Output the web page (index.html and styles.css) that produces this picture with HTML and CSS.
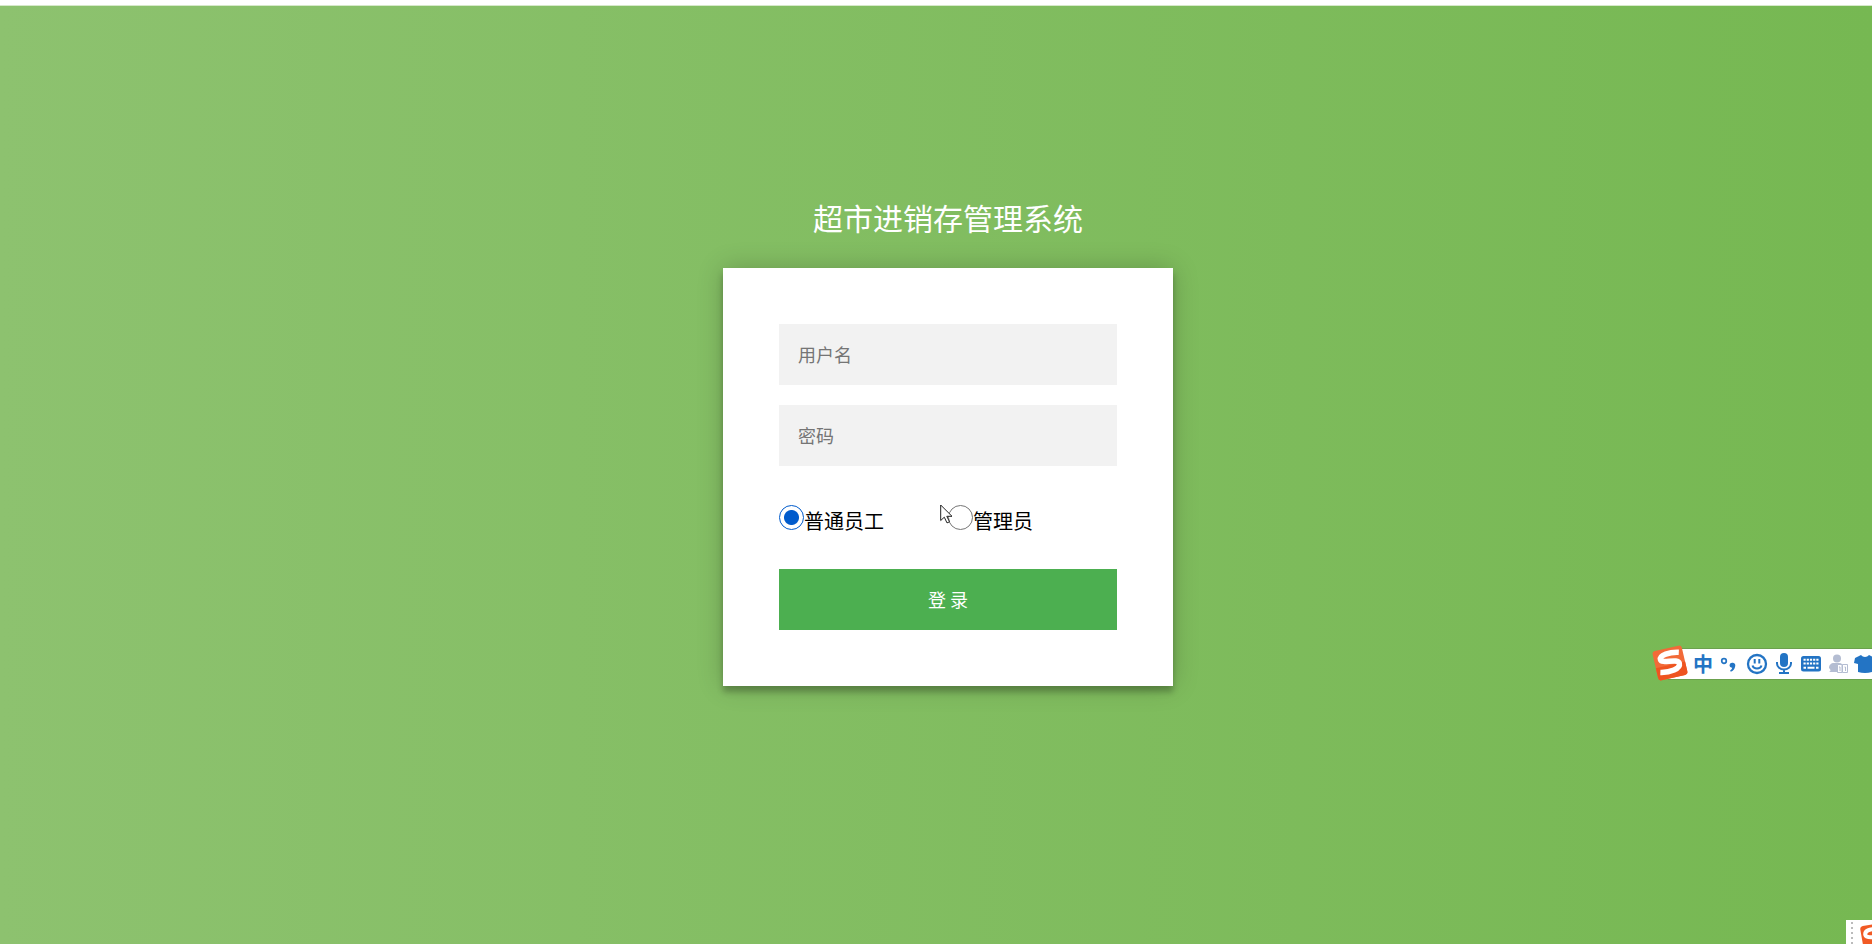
FILE: index.html
```html
<!DOCTYPE html>
<html lang="zh-CN">
<head>
<meta charset="UTF-8">
<meta name="viewport" content="width=device-width, initial-scale=1.0">
<title>超市进销存管理系统</title>
<link rel="stylesheet" href="styles.css">
</head>
<body>
<main class="login-page">
    <h1 class="title">超市进销存管理系统</h1>
    <form class="login-form" id="loginForm">
        <input class="field" type="text" name="username" placeholder="用户名" aria-label="用户名">
        <input class="field" type="password" name="password" placeholder="密码" aria-label="密码">
        <div class="roles">
            <div class="role">
                <input type="radio" id="staff" name="role" value="staff" checked>
                <label for="staff">普通员工</label>
            </div>
            <div class="role">
                <input type="radio" id="admin" name="role" value="admin">
                <label for="admin">管理员</label>
            </div>
        </div>
        <button class="submit" type="submit">登 录</button>
    </form>
</main>

<!-- mouse pointer -->
<svg class="cursor" viewBox="0 0 13 20" aria-hidden="true">
    <path d="M.7 1v15.500l3.600-3.300 2.700 5.700 2.500-1.100-2.700-5.500h5.200z" fill="#fff" stroke="#222" stroke-width="1"/>
</svg>

<!-- input method bar -->
<div class="ime">
    <svg class="ime-logo" viewBox="0 0 36 36" aria-hidden="true">
        <g transform="rotate(-13 18 18)">
            <rect x="3" y="3" width="30" height="30" rx="3" fill="#f26a38"/>
            <path d="M3 20h30v10a3 3 0 0 1-3 3H6a3 3 0 0 1-3-3z" fill="#ee5420"/>
            <path d="M29 9.500C20 7 9.500 8 9.500 12.500C9.500 17.500 27 14.500 27 20.500C27 26 16 27.500 6.500 25" fill="none" stroke="#fff" stroke-width="5.500"/>
        </g>
    </svg>
    <button class="ime-btn ime-lang" type="button">中</button>
    <button class="ime-btn" type="button" aria-label="标点">
        <svg viewBox="0 0 22 22"><circle cx="5" cy="8" r="2.300" fill="none" stroke="#2374c4" stroke-width="1.700"/><path d="M10.500 12a2.900 2.900 0 1 1 5.700 1.300c-.5 2.800-2 4.700-4.500 5.400l-.5-1.500c1.200-.6 1.800-1.300 2-2.400-1.500 0-2.600-1.100-2.700-2.800z" fill="#2374c4"/></svg>
    </button>
    <button class="ime-btn" type="button" aria-label="表情">
        <svg viewBox="0 0 22 22"><circle cx="11" cy="11" r="9" fill="none" stroke="#2374c4" stroke-width="2.300"/><path d="M8.700 6v4.500M13.300 6v4.500" stroke="#2374c4" stroke-width="2"/><path d="M6.500 12.500c1.200 4 7.800 4 9 0" fill="none" stroke="#2374c4" stroke-width="2"/></svg>
    </button>
    <button class="ime-btn" type="button" aria-label="语音">
        <svg viewBox="0 0 22 22"><rect x="7" y="0" width="8" height="14" rx="4" fill="#2374c4"/><path d="M4 9v1.500a7 6 0 0 0 14 0V9M11 16.500v3M6 20h10" fill="none" stroke="#2374c4" stroke-width="2"/></svg>
    </button>
    <button class="ime-btn" type="button" aria-label="键盘">
        <svg viewBox="0 0 22 22"><rect x="1" y="3" width="20" height="15.500" rx="2.500" fill="#2374c4"/><path d="M3.500 6.800h15M3.500 10.500h15" stroke="#fff" stroke-width="2" stroke-dasharray="2.200 1"/><path d="M3.500 14.800h2.500M7.500 14.800h7M16 14.800h2.500" stroke="#fff" stroke-width="2"/></svg>
    </button>
    <button class="ime-btn" type="button" aria-label="用户">
        <svg viewBox="0 0 22 22"><circle cx="10" cy="5.500" r="4" fill="#b4bdd2"/><path d="M2 19c2-1 2-2 0-4 0-3 2-5 5-5h5c3 0 4 2 4 4v5z" fill="#b4bdd2"/><path d="M10.500 11.500h4.500v8h-4.500zM15.500 11.500h5v8h-5z" fill="#fff" stroke="#b4bdd2"/><path d="M12 14h1v4M17.500 14h1v4" fill="none" stroke="#b4bdd2"/></svg>
    </button>
    <button class="ime-btn" type="button" aria-label="皮肤">
        <svg viewBox="0 0 22 22"><path d="M7 2c2 2.500 6 2.500 8 0l6 3 1 5-4 1v8q-7 2-14 0v-8l-4-1 1-5z" fill="#2374c4"/></svg>
    </button>
</div>

<div class="tray">
    <svg viewBox="0 0 26 24" aria-hidden="true">
        <path d="M6 2v22" stroke="#bbb" stroke-width="2" stroke-dasharray="2 3"/>
        <g transform="rotate(-10 30 18)">
            <rect x="16" y="4" width="30" height="30" rx="3" fill="#f15a24"/>
            <path d="M32 9c-7-1-12 0-12 4 0 5 12 2 12 8" fill="none" stroke="#fff" stroke-width="4"/>
        </g>
    </svg>
</div>

<script>
    document.getElementById("loginForm").addEventListener("submit", function(event) {
        event.preventDefault();
    });
</script>
</body>
</html>
```
FILE: styles.css
```css
body {
    font-family: "Noto Sans CJK SC", "Microsoft YaHei", sans-serif;
    background: linear-gradient(to left, #76b852, #8dc26f);
    border-top: 5px solid #fff;
    box-shadow: inset 0 1px 0 #d6e9ca;
    box-sizing: border-box;
    min-height: 100vh;
    margin: 0;
    padding-left: 24px;
    overflow: hidden;
}
.login-page {
    width: 450px;
    max-width: 100%;
    margin: 0 auto;
    padding: 188px 0 40px;
}
.title {
    margin: 0 0 27px;
    font-size: 30px;
    font-weight: 400;
    line-height: 48px;
    text-align: center;
    color: #fff;
}
.login-form {
    background-color: #fff;
    padding: 56px;
    box-shadow: 0 0 25px rgba(0, 0, 0, 0.2), 0 6px 6px rgba(0, 0, 0, 0.24);
}
.field {
    display: block;
    width: 100%;
    height: 61px;
    margin: 0 0 20px;
    padding: 0 19px 2px;
    border: 0;
    outline: 0;
    background-color: #f2f2f2;
    box-sizing: border-box;
    font-family: inherit;
    font-size: 18px;
}
.field::placeholder {
    color: #757575;
}
.roles {
    display: flex;
    margin: 39px 0 36px;
}
.role {
    display: flex;
    flex: 1;
    height: 28px;
}
.role input {
    appearance: none;
    width: 25px;
    height: 25px;
    margin: 0;
    border: 1px solid #767676;
    border-radius: 50%;
    background-color: #fff;
}
.role input:checked {
    border-color: #005bcc;
    background: radial-gradient(circle, #005bcc 7px, #fff 8px);
}
.role label {
    padding-top: 2px;
    font-size: 20px;
    line-height: 28px;
    color: #000;
}
.submit {
    display: block;
    width: 100%;
    height: 61px;
    padding: 0 0 2px;
    border: 0;
    background-color: #4caf50;
    color: #fff;
    font-family: inherit;
    font-size: 18px;
    cursor: pointer;
}
.submit:hover {
    background-color: #43a047;
}
.cursor {
    position: absolute;
    left: calc(50% + 4px);
    top: 504px;
    width: 13px;
    height: 20px;
}
.ime {
    position: absolute;
    right: 0;
    top: 649px;
    width: 204px;
    height: 30px;
    padding-left: 24px;
    display: flex;
    align-items: center;
    gap: 5px;
    box-sizing: border-box;
    background-color: #fff;
    box-shadow: 0 0 1px #333;
    clip-path: inset(-10px 0 -10px -20px);
}
.ime-logo {
    position: absolute;
    left: -16px;
    top: -4px;
    width: 36px;
    height: 36px;
}
.ime-btn {
    flex: none;
    width: 22px;
    height: 22px;
    padding: 0;
    border: 0;
    background: none;
}
.ime-btn svg {
    display: block;
    width: 22px;
    height: 22px;
}
.ime-lang {
    font-family: inherit;
    font-size: 20px;
    font-weight: 700;
    line-height: 22px;
    color: #2374c4;
}
.tray {
    position: absolute;
    right: 0;
    bottom: 0;
    width: 26px;
    height: 24px;
    background-color: #fff;
    overflow: hidden;
}
.tray svg {
    display: block;
    width: 26px;
    height: 24px;
}
```
